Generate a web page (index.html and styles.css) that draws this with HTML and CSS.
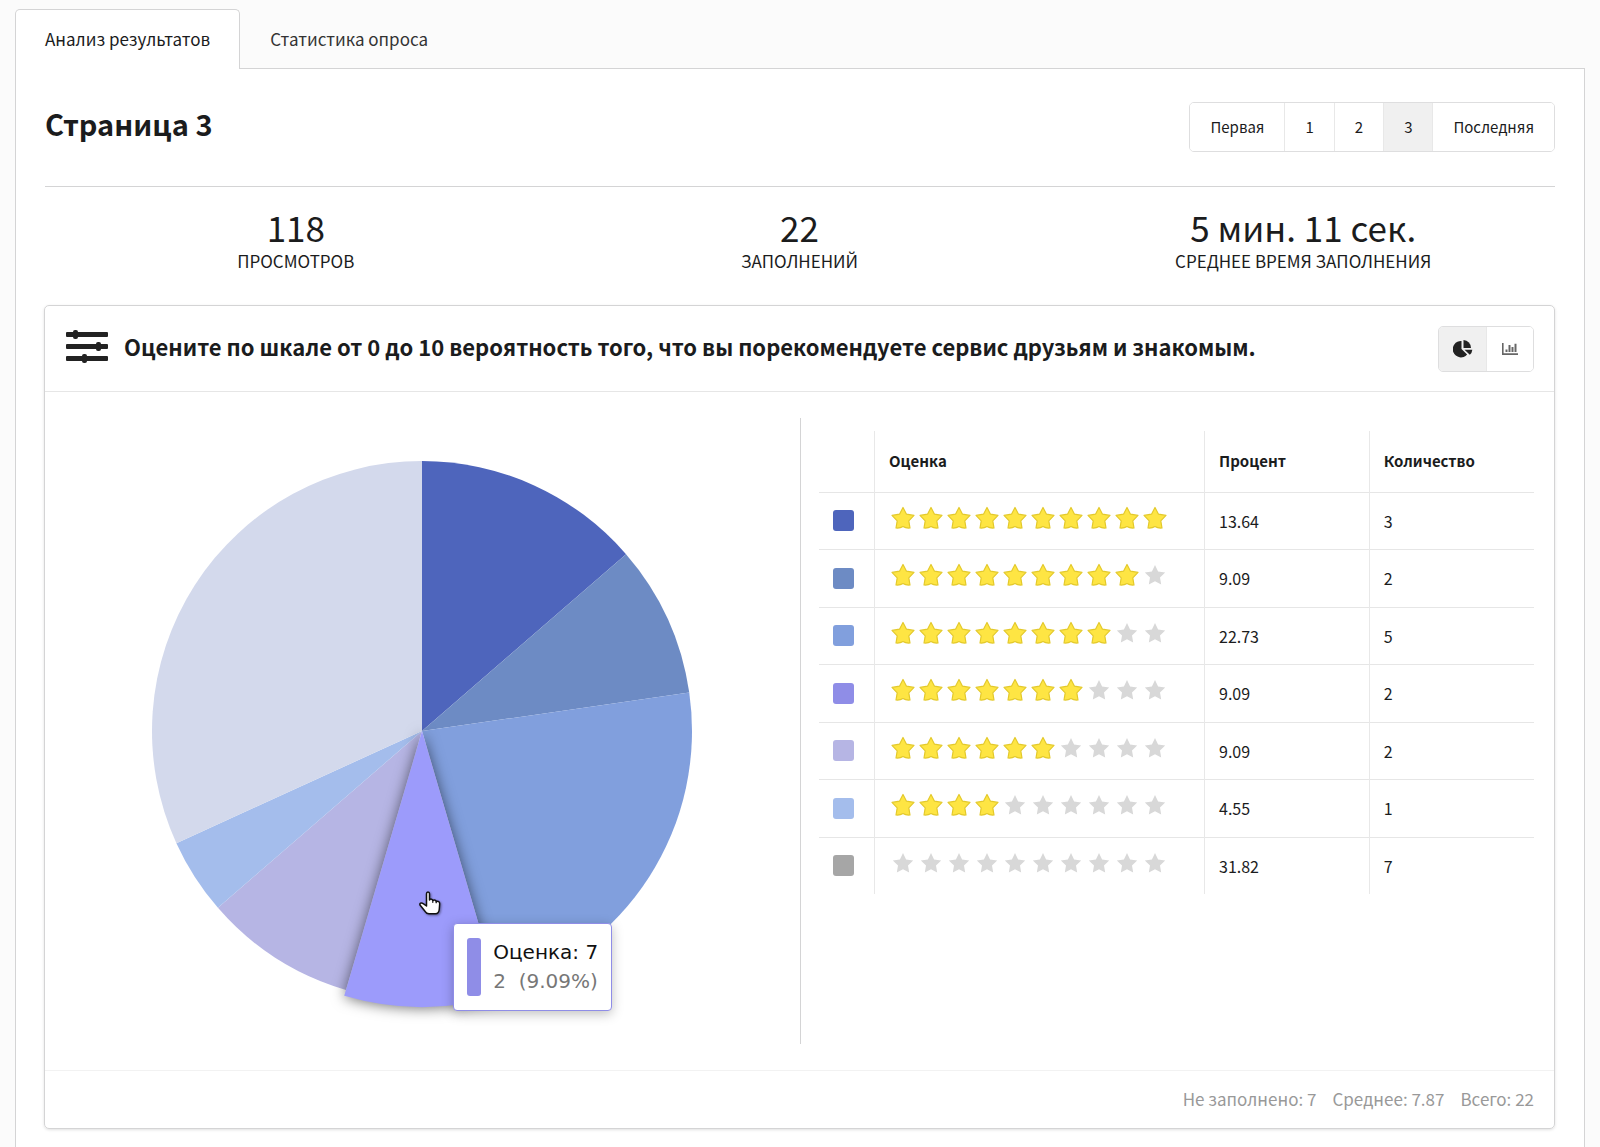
FILE: index.html
```html
<!DOCTYPE html>
<html lang="ru">
<head>
<meta charset="utf-8">
<meta name="viewport" content="width=device-width, initial-scale=1">
<title>Анализ результатов</title>
<link rel="stylesheet" href="styles.css">
</head>
<body>
<svg class="defs" aria-hidden="true">
  <defs>
    <pattern id="star-on" width="28" height="28" patternUnits="userSpaceOnUse">
      <path d="M14 3.500l3.500 6.700 7.500 1.200-5.200 5.400 1.200 7.200c-2.600.3-4.800-.1-7-1.500-2.200 1.400-4.400 1.800-7 1.500l1.200-7.200L3 11.400l7.500-1.200z" fill="#fee543" stroke="#e3c92a" stroke-width="1.200" stroke-linejoin="round"/>
    </pattern>
    <pattern id="star-off" width="28" height="28" patternUnits="userSpaceOnUse">
      <path d="M14 4l3.100 6.400 7.100 1-5.200 5 1.200 7.100-6.200-3.300-6.200 3.300L9 16.400l-5.200-5 7.100-1z" fill="#d8d8d8"/>
    </pattern>
  </defs>
</svg>

<nav class="tabs">
  <a class="tab tab-active" href="#analysis">Анализ результатов</a>
  <a class="tab" href="#stats">Статистика опроса</a>
</nav>

<main class="panel" id="analysis">
  <header class="page-head">
    <h1>Страница 3</h1>
    <div class="pager">
      <button type="button">Первая</button>
      <button type="button">1</button>
      <button type="button">2</button>
      <button type="button" class="current">3</button>
      <button type="button">Последняя</button>
    </div>
  </header>

  <section class="stats" id="stats">
    <div><div class="stat-value">118</div><div class="stat-label">Просмотров</div></div>
    <div><div class="stat-value">22</div><div class="stat-label">Заполнений</div></div>
    <div><div class="stat-value">5 мин. 11 сек.</div><div class="stat-label">Среднее время заполнения</div></div>
  </section>

  <article class="card">
    <header class="card-head">
      <svg class="sliders" viewBox="0 0 42 34" aria-hidden="true">
        <g fill="#222">
          <rect y="3" width="42" height="5" rx="1"/><rect x="7" y="1" width="5" height="9" rx="2"/>
          <rect y="15" width="42" height="5" rx="1"/><rect x="30" y="13" width="5" height="9" rx="2"/>
          <rect y="27" width="42" height="5" rx="1"/><rect x="16" y="25" width="5" height="9" rx="2"/>
        </g>
      </svg>
      <h2>Оцените по шкале от 0 до 10 вероятность того, что вы порекомендуете сервис друзьям и знакомым.</h2>
      <div class="switch">
        <button type="button" class="current" aria-label="Круговая диаграмма">
          <svg width="20" height="18" viewBox="0 0 20 18"><g fill="#222"><path d="M8.500 1v8l5.600 5.600A8.200 8.200 0 1 1 8.500 1z"/><path d="M10.500 0a7.800 7.800 0 0 1 7.500 8h-7.500z"/><path d="M11.500 9.800h7.800a7 7 0 0 1-2.500 5z"/></g></svg>
        </button>
        <button type="button" aria-label="Столбчатая диаграмма">
          <svg width="18" height="14" viewBox="0 0 18 14"><path fill="#666" d="M1 1h1.600v10.200H17V13H1zM4.500 7.500h2V10h-2zM7.500 3h2v7h-2zM10.500 5h2v5h-2zM13.500 1.800h2V10h-2z"/></svg>
        </button>
      </div>
    </header>

    <div class="card-body">
      <div class="chart-col">
        <figure class="chart">
          <svg viewBox="-300 -300 600 600" role="img" aria-label="Распределение оценок">
            <path fill="#4e65bc" d="M0 0V-270A270 270 0 0 1 204.050-176.810z"/>
            <path fill="#6d8bc4" d="M0 0L204.050-176.810A270 270 0 0 1 267.250-38.430z"/>
            <path fill="#819fdd" d="M0 0L267.250-38.430A270 270 0 0 1 76.070 259.060z"/>
            <path fill="#b6b5e4" d="M0 0L-76.070 259.060A270 270 0 0 1-204.050 176.810z"/>
            <path fill="#a4bdec" d="M0 0L-204.050 176.810A270 270 0 0 1-245.600 112.160z"/>
            <path fill="#d3d9ec" d="M0 0L-245.600 112.160A270 270 0 0 1 0-270z"/>
            <path class="slice-active" fill="#9c9bfb" d="M0 0L77.760 264.820A276 276 0 0 1-77.760 264.820z"/>
          </svg>
          <svg class="cursor" viewBox="0 0 25 25" aria-hidden="true"><path fill="#fff" stroke="#111" stroke-width="1.500" stroke-linejoin="round" d="M8.500 15V2.800Q8.500 1 10 1t1.500 1.800V9q1-1.200 2-.8 1.300.3 1.300 1.600 1.200-1.200 2.400-.6 1.100.5 1 1.700 1.400-1 2.500-.200 1 .6 1 2l-.4 5.300q-.3 4.800-3.800 4.800h-6.500q-2.500 0-4-2.500l-4.800-6q-.8-1.500.3-2.200 1.300-.6 2.700.600z"/><path d="M14.800 9.500v2.500M18.200 10.800v1.500" stroke="#111" stroke-width="1"/></svg>
          <figcaption class="tooltip">
            <span class="tooltip-bar"></span>
            <span><span class="tooltip-title">Оценка: 7</span><span class="tooltip-text">2&nbsp; (9.09%)</span></span>
          </figcaption>
        </figure>
      </div>

      <div class="table-col">
        <table>
          <thead>
            <tr><th class="c-key"></th><th class="c-score">Оценка</th><th class="c-num">Процент</th><th class="c-num">Количество</th></tr>
          </thead>
          <tbody>
            <tr><td><span class="swatch s10"></span></td><td><svg class="stars" viewBox="0 0 280 28"><rect width="280" height="28" fill="url(#star-on)"/></svg></td><td>13.64</td><td>3</td></tr>
            <tr><td><span class="swatch s9"></span></td><td><svg class="stars" viewBox="0 0 280 28"><rect x="252" width="28" height="28" fill="url(#star-off)"/><rect width="252" height="28" fill="url(#star-on)"/></svg></td><td>9.09</td><td>2</td></tr>
            <tr><td><span class="swatch s8"></span></td><td><svg class="stars" viewBox="0 0 280 28"><rect x="224" width="56" height="28" fill="url(#star-off)"/><rect width="224" height="28" fill="url(#star-on)"/></svg></td><td>22.73</td><td>5</td></tr>
            <tr><td><span class="swatch s7"></span></td><td><svg class="stars" viewBox="0 0 280 28"><rect x="196" width="84" height="28" fill="url(#star-off)"/><rect width="196" height="28" fill="url(#star-on)"/></svg></td><td>9.09</td><td>2</td></tr>
            <tr><td><span class="swatch s6"></span></td><td><svg class="stars" viewBox="0 0 280 28"><rect x="168" width="112" height="28" fill="url(#star-off)"/><rect width="168" height="28" fill="url(#star-on)"/></svg></td><td>9.09</td><td>2</td></tr>
            <tr><td><span class="swatch s4"></span></td><td><svg class="stars" viewBox="0 0 280 28"><rect x="112" width="168" height="28" fill="url(#star-off)"/><rect width="112" height="28" fill="url(#star-on)"/></svg></td><td>4.55</td><td>1</td></tr>
            <tr><td><span class="swatch s0"></span></td><td><svg class="stars" viewBox="0 0 280 28"><rect width="280" height="28" fill="url(#star-off)"/></svg></td><td>31.82</td><td>7</td></tr>
          </tbody>
        </table>
      </div>
    </div>

    <footer class="card-foot">
      <span>Не заполнено: 7</span>
      <span>Среднее: 7.87</span>
      <span>Всего: 22</span>
    </footer>
  </article>
</main>
</body>
</html>
```
FILE: styles.css
```css
* { box-sizing: border-box; }

body {
  margin: 0;
  min-height: 100vh;
  padding: 9px 15px 0;
  display: flex;
  flex-direction: column;
  background: #fbfbfb;
  color: #1b1c1d;
  font-family: "Noto Sans CJK SC", "Noto Sans", sans-serif;
  font-size: 16px;
  line-height: 24px;
}

.defs { position: absolute; width: 0; height: 0; }

/* Tabs */
.tabs { display: flex; position: relative; z-index: 1; }
.tab {
  height: 60px;
  padding: 0 29px;
  border: 1px solid transparent;
  border-bottom: 0;
  color: #333;
  font-size: 17px;
  line-height: 58px;
  text-decoration: none;
}
.tab-active {
  background: #fff;
  border-color: #d4d4d5;
  border-radius: 5px 5px 0 0;
  color: #1b1c1d;
}

.panel {
  flex: 1;
  margin-top: -1px;
  padding: 33px 29px 18px 28px;
  background: #fff;
  border: 1px solid #d4d4d5;
  border-bottom: 0;
}

/* Page heading and pagination */
.page-head {
  display: flex;
  align-items: flex-start;
  justify-content: space-between;
  margin: 0 0 0 1px;
  padding-bottom: 34px;
  border-bottom: 1px solid #d4d4d5;
}
h1 { margin: 0; font-size: 29px; line-height: 42px; font-weight: 600; }

.pager, .switch {
  display: flex;
  border: 1px solid #dededf;
  border-radius: 5px;
  overflow: hidden;
}
.pager button, .switch button {
  margin: 0;
  padding: 0 20px;
  border: 0;
  border-left: 1px solid #e8e8e8;
  background: #fff;
  color: #1b1c1d;
  font: inherit;
  font-size: 15px;
  line-height: 48px;
}
.pager button:first-child, .switch button:first-child { border-left: 0; }
.pager .current, .switch .current { background: #f0f0f0; }

/* Summary figures */
.stats {
  display: grid;
  grid-template-columns: repeat(3, 1fr);
  padding: 19px 0 30px;
  text-align: center;
}
.stat-value { font-size: 35px; line-height: 41px; }
.stat-label { font-size: 17px; line-height: 28px; text-transform: uppercase; }

/* Question card */
.card {
  border: 1px solid #d4d4d5;
  border-radius: 5px;
  box-shadow: 0 1px 3px rgba(0, 0, 0, .12);
}
.card-head {
  display: flex;
  align-items: flex-start;
  padding: 20px 20px 19px 21px;
  border-bottom: 1px solid #e6e6e6;
}
.sliders { width: 42px; height: 40px; margin-right: 16px; flex: none; }
h2 { flex: 1; margin: 0; font-size: 22px; line-height: 40px; font-weight: 600; }
.switch button {
  display: flex;
  align-items: center;
  justify-content: center;
  width: 47px;
  height: 44px;
  padding: 0;
}

.card-body { display: grid; grid-template-columns: 1fr 1fr; padding: 26px 0; }
.chart-col {
  display: flex;
  align-items: center;
  justify-content: center;
  height: 626px;
}
.chart { position: relative; width: 600px; height: 600px; margin: 0; flex: none; }
.chart > svg { display: block; overflow: visible; }
.slice-active { filter: drop-shadow(0 1px 7px rgba(0, 0, 0, .55)); }
.chart > .cursor { position: absolute; left: 296px; top: 460px; width: 25px; height: 25px; filter: drop-shadow(1px 1px 1px rgba(0, 0, 0, .4)); }

.tooltip {
  position: absolute;
  left: 331px;
  top: 492px;
  display: flex;
  gap: 12px;
  padding: 14px 13px;
  background: #fff;
  border: 1px solid #8f8de7;
  border-radius: 4px;
  box-shadow: 0 3px 12px rgba(0, 0, 0, .25);
  font-family: "DejaVu Sans", sans-serif;
  font-size: 20px;
  line-height: 29px;
  white-space: nowrap;
}
.tooltip-bar { width: 14px; border-radius: 3px; background: #8f8de7; }
.tooltip-title, .tooltip-text { display: block; }
.tooltip-title { color: #111; }
.tooltip-text { color: #777; }

/* Score table */
.table-col { padding: 13px 20px 0 18px; border-left: 1px solid #d4d4d5; }
table { width: 100%; height: 463px; border-collapse: collapse; table-layout: fixed; }
th, td { padding: 0 0 0 14px; border-left: 1px solid #e8e8e8; text-align: left; }
th:first-child, td:first-child { border-left: 0; }
tr + tr, tbody tr { border-top: 1px solid #e6e6e6; }
thead tr { height: 61px; }
th { font-size: 15px; font-weight: 600; }
.c-key { width: 56px; }
.c-score { width: 330px; }
.swatch { display: block; width: 21px; height: 21px; border-radius: 3px; }
.s10 { background: #4e65bc; }
.s9 { background: #6d8bc4; }
.s8 { background: #819fdd; }
.s7 { background: #8f8de7; }
.s6 { background: #b6b5e4; }
.s4 { background: #a4bdec; }
.s0 { background: #a6a6a6; }
.stars { display: block; width: 280px; height: 28px; margin-bottom: 6px; }

.card-foot {
  display: flex;
  justify-content: flex-end;
  gap: 16px;
  padding: 15px 20px 16px;
  border-top: 1px solid #f2f2f2;
  color: #999;
  font-size: 17px;
  line-height: 26px;
}
```
